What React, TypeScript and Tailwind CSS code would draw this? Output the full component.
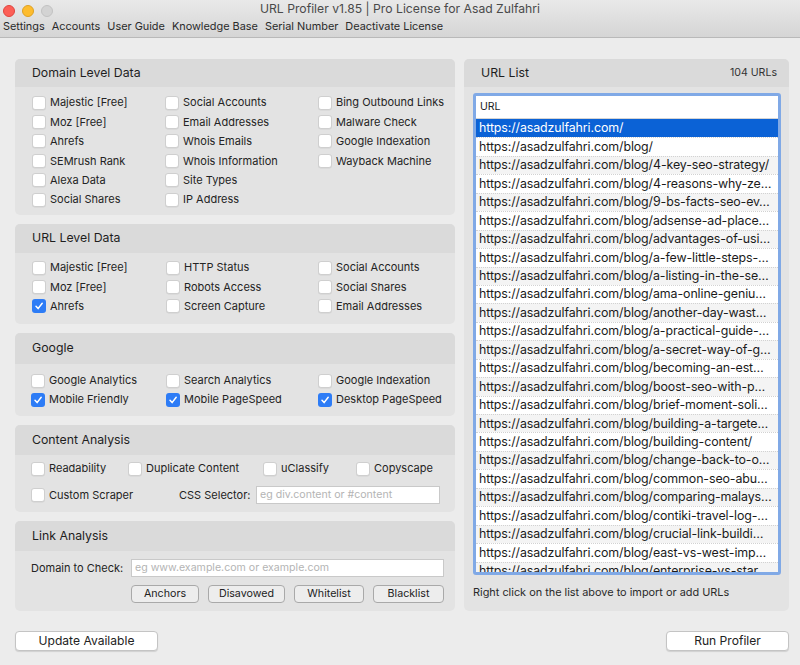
import type { ReactNode } from "react";

const menu = [
  "Settings",
  "Accounts",
  "User Guide",
  "Knowledge Base",
  "Serial Number",
  "Deactivate License",
];

const urls = [
  "https://asadzulfahri.com/",
  "https://asadzulfahri.com/blog/",
  "https://asadzulfahri.com/blog/4-key-seo-strategy/",
  "https://asadzulfahri.com/blog/4-reasons-why-ze…",
  "https://asadzulfahri.com/blog/9-bs-facts-seo-ev…",
  "https://asadzulfahri.com/blog/adsense-ad-place…",
  "https://asadzulfahri.com/blog/advantages-of-usi…",
  "https://asadzulfahri.com/blog/a-few-little-steps-…",
  "https://asadzulfahri.com/blog/a-listing-in-the-se…",
  "https://asadzulfahri.com/blog/ama-online-geniu…",
  "https://asadzulfahri.com/blog/another-day-wast…",
  "https://asadzulfahri.com/blog/a-practical-guide-…",
  "https://asadzulfahri.com/blog/a-secret-way-of-g…",
  "https://asadzulfahri.com/blog/becoming-an-est…",
  "https://asadzulfahri.com/blog/boost-seo-with-p…",
  "https://asadzulfahri.com/blog/brief-moment-soli…",
  "https://asadzulfahri.com/blog/building-a-targete…",
  "https://asadzulfahri.com/blog/building-content/",
  "https://asadzulfahri.com/blog/change-back-to-o…",
  "https://asadzulfahri.com/blog/common-seo-abu…",
  "https://asadzulfahri.com/blog/comparing-malays…",
  "https://asadzulfahri.com/blog/contiki-travel-log-…",
  "https://asadzulfahri.com/blog/crucial-link-buildi…",
  "https://asadzulfahri.com/blog/east-vs-west-imp…",
  "https://asadzulfahri.com/blog/enterprise-vs-star…",
];

function Check({ checked = false }: { checked?: boolean }) {
  if (checked) {
    return (
      <span className="flex h-[14px] w-[14px] shrink-0 items-center justify-center rounded-[3px] bg-[#2d7cf6]">
        <svg width="10" height="10" viewBox="0 0 10 10" fill="none">
          <path
            d="M2 5.3 L4.1 7.6 L8.2 2.3"
            stroke="white"
            strokeWidth="1.5"
            strokeLinecap="round"
            strokeLinejoin="round"
          />
        </svg>
      </span>
    );
  }
  return (
    <span className="h-[14px] w-[14px] shrink-0 rounded-[3px] border border-[#cfcfcf] bg-white shadow-[0_0.5px_0.5px_rgba(0,0,0,0.08)]" />
  );
}

function Option({
  label,
  checked,
  className = "",
  h = "h-[19.4px]",
}: {
  label: string;
  checked?: boolean;
  className?: string;
  h?: string;
}) {
  return (
    <div className={`flex items-center gap-[4px] ${h} ${className}`}>
      <Check checked={checked} />
      <span className="whitespace-nowrap">{label}</span>
    </div>
  );
}

function Panel({
  title,
  right,
  headerH,
  className = "",
  children,
}: {
  title: string;
  right?: string;
  headerH: string;
  className?: string;
  children: ReactNode;
}) {
  return (
    <section
      className={`flex shrink-0 flex-col overflow-hidden rounded-[5px] bg-[#e3e3e3] ${className}`}
    >
      <div
        className={`flex ${headerH} shrink-0 items-center justify-between bg-[#dadada] pl-[17px] pr-[12px] text-[12.3px] text-[#1e1e1e]`}
      >
        <span>{title}</span>
        {right && <span className="text-[10.6px] text-[#333]">{right}</span>}
      </div>
      {children}
    </section>
  );
}

function SmallButton({ label, w }: { label: string; w: string }) {
  return (
    <button
      className={`h-[18px] ${w} rounded-[4px] border border-[#a9a9a9] bg-[#ededed] text-[10.7px] leading-none text-[#222]`}
    >
      {label}
    </button>
  );
}

function Light({ color }: { color: string }) {
  return <span className={`h-[12px] w-[12px] rounded-full ${color}`} />;
}

export default function App() {
  return (
    <div className="flex h-[665px] w-[800px] flex-col overflow-hidden bg-[#ececec] font-['Inter','Noto_Sans',sans-serif] text-[11px] text-[#242424]">
      {/* window chrome */}
      <header className="h-[38px] shrink-0 border-b border-[#b9b9b9] bg-gradient-to-b from-[#e9e9e9] to-[#d5d5d5]">
        <div className="grid h-[16px] grid-cols-[1fr_auto_1fr] items-center">
          <div className="flex items-center gap-[7px] pl-[3px] pt-[3px]">
            <Light color="bg-[#fc5f57] border border-[#e0443e]" />
            <Light color="bg-[#fdbc2e] border border-[#dea123]" />
            <Light color="bg-[#d3d3d3] border border-[#c2c2c2]" />
          </div>
          <div className="text-[12.2px] text-[#4a4a4a]">
            URL Profiler v1.85 | Pro License for Asad Zulfahri
          </div>
          <div />
        </div>
        <nav className="flex h-[21px] items-center gap-[7px] pl-[3px] text-[10.9px] text-[#2a2a2a]">
          {menu.map((m) => (
            <span key={m}>{m}</span>
          ))}
        </nav>
      </header>

      <main className="flex gap-[9px] pl-[15px] pr-[11px] pt-[21px]">
        <div className="flex w-[440px] shrink-0 flex-col gap-[9px]">
          <Panel title="Domain Level Data" headerH="h-[28px]" className="h-[156px]">
            <div className="grid grid-cols-[133px_153px_1fr] pl-[17px] pt-[6px]">
              <div>
                <Option label="Majestic [Free]" />
                <Option label="Moz [Free]" />
                <Option label="Ahrefs" />
                <Option label="SEMrush Rank" />
                <Option label="Alexa Data" />
                <Option label="Social Shares" />
              </div>
              <div>
                <Option label="Social Accounts" />
                <Option label="Email Addresses" />
                <Option label="Whois Emails" />
                <Option label="Whois Information" />
                <Option label="Site Types" />
                <Option label="IP Address" />
              </div>
              <div>
                <Option label="Bing Outbound Links" />
                <Option label="Malware Check" />
                <Option label="Google Indexation" />
                <Option label="Wayback Machine" />
              </div>
            </div>
          </Panel>

          <Panel title="URL Level Data" headerH="h-[29px]" className="h-[100px]">
            <div className="grid grid-cols-[134px_152px_1fr] pl-[17px] pt-[5px]">
              <div>
                <Option label="Majestic [Free]" />
                <Option label="Moz [Free]" />
                <Option label="Ahrefs" checked />
              </div>
              <div>
                <Option label="HTTP Status" />
                <Option label="Robots Access" />
                <Option label="Screen Capture" />
              </div>
              <div>
                <Option label="Social Accounts" />
                <Option label="Social Shares" />
                <Option label="Email Addresses" />
              </div>
            </div>
          </Panel>

          <Panel title="Google" headerH="h-[31px]" className="h-[83px]">
            <div className="grid grid-cols-[135px_152px_1fr] pl-[16px] pt-[7px]">
              <div>
                <Option label="Google Analytics" h="h-[19px]" />
                <Option label="Mobile Friendly" checked h="h-[19px]" />
              </div>
              <div>
                <Option label="Search Analytics" h="h-[19px]" />
                <Option label="Mobile PageSpeed" checked h="h-[19px]" />
              </div>
              <div>
                <Option label="Google Indexation" h="h-[19px]" />
                <Option label="Desktop PageSpeed" checked h="h-[19px]" />
              </div>
            </div>
          </Panel>

          <Panel title="Content Analysis" headerH="h-[30px]" className="h-[87px]">
            <div className="pl-[16px] pt-[4px]">
              <div className="flex">
                <Option label="Readability" className="w-[97px]" h="h-[19px]" />
                <Option label="Duplicate Content" className="w-[135px]" h="h-[19px]" />
                <Option label="uClassify" className="w-[93px]" h="h-[19px]" />
                <Option label="Copyscape" h="h-[19px]" />
              </div>
              <div className="mt-[8px] flex items-center">
                <Option label="Custom Scraper" className="w-[148px]" h="h-[18px]" />
                <span className="w-[77px] whitespace-nowrap">CSS Selector:</span>
                <div className="flex h-[18px] w-[184px] items-center border border-[#c9c9c9] bg-white px-[3px] text-[10.6px] text-[#b4b4b4]">
                  eg div.content or #content
                </div>
              </div>
            </div>
          </Panel>

          <Panel title="Link Analysis" headerH="h-[30px]" className="h-[90px]">
            <div className="pl-[16px] pt-[8px]">
              <div className="flex items-center">
                <span className="w-[100px] whitespace-nowrap">Domain to Check:</span>
                <div className="flex h-[18px] w-[313px] items-center border border-[#c9c9c9] bg-white px-[3px] text-[10.6px] text-[#b4b4b4]">
                  eg www.example.com or example.com
                </div>
              </div>
              <div className="ml-[100px] mt-[8px] flex gap-[9px]">
                <SmallButton label="Anchors" w="w-[68px]" />
                <SmallButton label="Disavowed" w="w-[77px]" />
                <SmallButton label="Whitelist" w="w-[70px]" />
                <SmallButton label="Blacklist" w="w-[71px]" />
              </div>
            </div>
          </Panel>
        </div>

        <Panel title="URL List" right="104 URLs" headerH="h-[28px]" className="h-[552px] w-[325px]">
          <div className="pl-[9px] pr-[8px] pt-[6px]">
            <div className="h-[482px] overflow-hidden rounded-[3px] border-[3px] border-[#80a9e6] bg-white">
              <div className="flex h-[23px] items-center border-b border-[#d4d4d4] pl-[4px] text-[10.5px] text-[#222]">
                URL
              </div>
              <ul className="text-[12.4px] leading-none tracking-[-0.1px] text-[#1b1b1b]">
                {urls.map((u, i) => (
                  <li
                    key={u}
                    className={`flex h-[18.45px] items-center pl-[3px] ${
                      i === 0
                        ? "bg-[#0b62d6] text-white"
                        : `border-t border-dotted border-[#d2d2d2] ${i % 2 === 1 ? "bg-white" : "bg-[#f4f4f4]"}`
                    }`}
                  >
                    <span className="whitespace-nowrap">{u}</span>
                  </li>
                ))}
              </ul>
            </div>
            <p className="mt-[9px] text-[10.9px] text-[#2a2a2a]">
              Right click on the list above to import or add URLs
            </p>
          </div>
        </Panel>
      </main>

      <footer className="mt-[20px] flex justify-between pl-[15px] pr-[11px]">
        <button className="h-[20px] w-[143px] rounded-[4px] border border-[#c4c4c4] bg-white text-[12.1px] text-[#222] shadow-[0_1px_1px_rgba(0,0,0,0.12)]">
          Update Available
        </button>
        <button className="h-[20px] w-[123px] rounded-[4px] border border-[#c4c4c4] bg-white text-[12.1px] text-[#222] shadow-[0_1px_1px_rgba(0,0,0,0.12)]">
          Run Profiler
        </button>
      </footer>
    </div>
  );
}
